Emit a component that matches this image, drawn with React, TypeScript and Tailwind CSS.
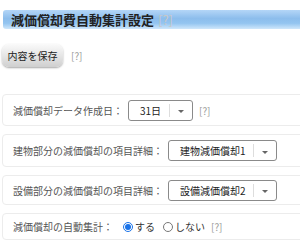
const font = { fontFamily: '"Noto Sans CJK JP", "Noto Sans", sans-serif' };

function Help({ light }: { light?: boolean }) {
  return <span className={light ? "text-[#c8c8c8]" : "text-[#9a9a9a]"}>[?]</span>;
}

function Select({ value, width }: { value: string; width: string }) {
  return (
    <div
      className={`flex h-[21px] ${width} items-center rounded-[3px] border border-[#8a8a8a] bg-white text-[10px] text-[#222]`}
    >
      <span className="flex-1 pl-[11px]">{value}</span>
      <span className="h-[13px] w-px bg-[#ddd]" />
      <span className="flex w-[22px] justify-center">
        <span className="mt-[3px] h-0 w-0 border-x-[3px] border-t-[3px] border-x-transparent border-t-[#666]" />
      </span>
    </div>
  );
}

function Row({ children, height }: { children: React.ReactNode; height: string }) {
  return (
    <div
      className={`ml-[2px] mr-[-20px] flex ${height} items-center rounded-[4px] border border-[#ececec] pl-[10px] text-[10px] text-[#555]`}
    >
      {children}
    </div>
  );
}

export default function App() {
  return (
    <div className="h-[247px] w-[300px] overflow-hidden bg-white" style={font}>
      <div className="pt-[10px]">
        <div className="ml-[3px] mr-[-10px] flex h-[19px] items-center rounded-l-[3px] bg-[linear-gradient(#b4d6f7,#8cbdec_45%,#94c5f0_70%,#cfe7fb)] pl-[8px] text-[13px] font-bold leading-none text-[#222]">
          減価償却費自動集計設定
          <span className="ml-[4px] font-normal">
            <Help light />
          </span>
        </div>
      </div>

      <div className="mt-[15px] flex items-center text-[10px]">
        <button className="ml-[2px] h-[23px] w-[61px] rounded-[7px] bg-[linear-gradient(#fafafa,#e6e6e6_50%,#cfcfcf)] text-[10px] text-[#222] shadow-[0_1px_2px_rgba(0,0,0,0.35)]">
          内容を保存
        </button>
        <span className="ml-[8px]">
          <Help />
        </span>
      </div>

      <div className="mt-[27px] flex flex-col gap-[8px]">
        <Row height="h-[32px]">
          <span>減価償却データ作成日：</span>
          <span className="ml-[5px]">
            <Select value="31日" width="w-[65px]" />
          </span>
          <span className="ml-[6px]">
            <Help />
          </span>
        </Row>
        <Row height="h-[33px]">
          <span>建物部分の減価償却の項目詳細：</span>
          <span className="ml-[5px]">
            <Select value="建物減価償却1" width="w-[109px]" />
          </span>
        </Row>
        <Row height="h-[30px]">
          <span>設備部分の減価償却の項目詳細：</span>
          <span className="ml-[5px]">
            <Select value="設備減価償却2" width="w-[109px]" />
          </span>
        </Row>
        <Row height="h-[27px]">
          <span>減価償却の自動集計：</span>
          <label className="ml-[10px] flex items-center">
            <span className="flex h-[10px] w-[10px] items-center justify-center rounded-full border border-[#1a73e8] bg-white">
              <span className="h-[6px] w-[6px] rounded-full bg-[#1a73e8]" />
            </span>
            <span className="ml-[2px] text-[#333]">する</span>
          </label>
          <label className="ml-[8px] flex items-center">
            <span className="h-[10px] w-[10px] rounded-full border border-[#777] bg-white" />
            <span className="ml-[2px] text-[#333]">しない</span>
          </label>
          <span className="ml-[6px]">
            <Help />
          </span>
        </Row>
      </div>
    </div>
  );
}
